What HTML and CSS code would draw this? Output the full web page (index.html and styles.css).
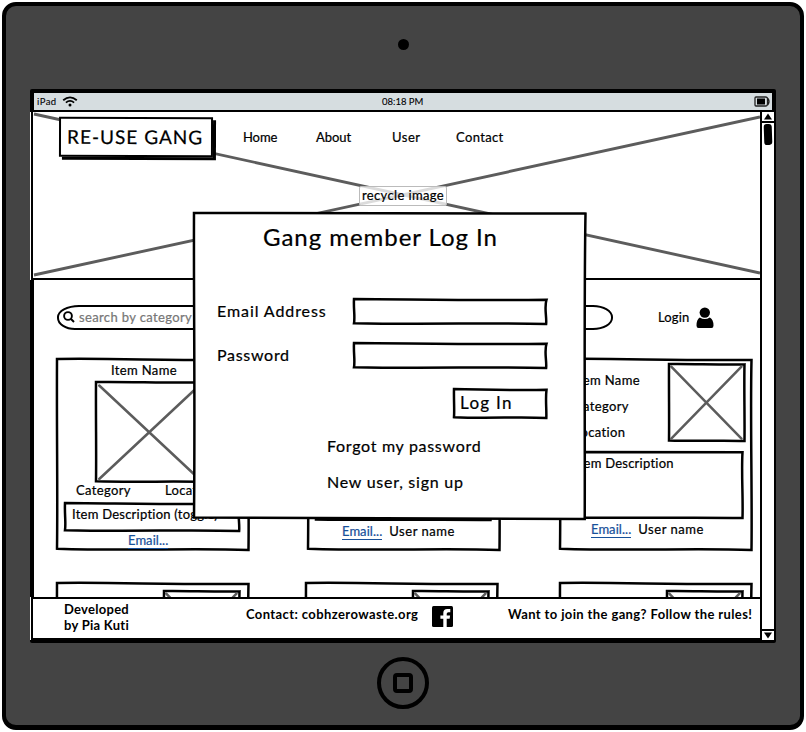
FILE: index.html
```
<!DOCTYPE html>
<html lang="en">
<head>
<meta charset="utf-8">
<title>Re-Use Gang</title>
<link rel="stylesheet" href="styles.css">
</head>
<body>
<svg class="defs" width="0" height="0" aria-hidden="true">
  <defs>
    <path id="box" vector-effect="non-scaling-stroke" d="M0,0 C30,-.5 60,1 100,.5 C99.3,30 100.4,70 100,100 C70,98.8 40,100.6 0,99.3 C.4,70 -.2,40 0,0Z"/>
    <path id="strip" vector-effect="non-scaling-stroke" d="M0,0 C30,1 60,6 100,3 C98.7,35 100.2,70 99.8,100 C70,94 40,103 0,97 C.6,70 -.3,40 0,0Z"/>
    <path id="cross" vector-effect="non-scaling-stroke" d="M3,3.5 L96,97 M96,3.5 L3,97"/>
  </defs>
</svg>
<div class="tablet">
  <div class="camera"></div>
  <div class="screen">
    <div class="status">
      <span class="carrier">iPad</span>
      <svg class="wifi" viewBox="0 0 16 11"><path d="M1.2 4.3Q8-1.6 14.8 4.3M3.9 6.6Q8 3.2 12.1 6.6"/><circle cx="8" cy="9" r="1.5"/></svg>
      <span class="clock">08:18 PM</span>
      <svg class="battery" viewBox="0 0 16 11"><path class="shell" d="M2 1h9.500q2 0 2 2v5q0 2-2 2h-9.500q-1 0-1-1v-7q0-1 1-1zM12.500 1.500q2.500 1 2.500 4t-2.500 4"/><rect x="3" y="2.500" width="8" height="6"/></svg>
    </div>
    <div class="view">
      <div class="page">
        <header class="hero">
          <svg class="hero-cross" viewBox="0 0 727 166" preserveAspectRatio="none"><path d="M1 2L727 161M1 163L727 5"/></svg>
          <div class="logo">RE-USE GANG</div>
          <nav><a class="n1">Home</a><a class="n2">About</a><a class="n3">User</a><a class="n4">Contact</a></nav>
          <div class="hero-label">recycle image</div>
        </header>
        <main>
          <div class="toolbar">
            <div class="search">
              <svg viewBox="0 0 12 12"><circle cx="5" cy="5" r="3.900"/><path d="M8 8l3 3"/></svg>
              <span>search by category</span>
            </div>
            <div class="login"><span>Login</span>
              <svg viewBox="0 0 18 22"><circle cx="8.800" cy="5.600" r="5.200"/><path d="M3.800 10.500Q8.800 13.500 13.800 10.500Q17.500 12.500 17.500 18.500Q17.500 21 15.500 21H2.500Q.5 21 .5 18.500Q.5 12.500 3.800 10.500Z"/></svg>
            </div>
          </div>
          <div class="row first">
            <article class="card">
              <svg class="frame" viewBox="0 0 100 100" preserveAspectRatio="none"><use href="#box"/></svg>
              <div class="name">Item Name</div>
              <div class="photo large"><svg class="frame" viewBox="0 0 100 100" preserveAspectRatio="none"><use href="#box"/><use class="x" href="#cross"/></svg></div>
              <div class="facts"><span>Category</span><span>Location</span></div>
              <div class="desc short"><svg class="frame" viewBox="0 0 100 100" preserveAspectRatio="none"><use href="#strip"/></svg><span>Item Description (toggle)</span></div>
              <div class="contact only"><a>Email...</a></div>
            </article>
            <article class="card">
              <svg class="frame" viewBox="0 0 100 100" preserveAspectRatio="none"><use href="#box"/></svg>
              <div class="info"></div>
              <div class="desc tall lower"><svg class="frame" viewBox="0 0 100 100" preserveAspectRatio="none"><use href="#box"/></svg></div>
              <div class="contact"><a>Email...</a><span>User name</span></div>
            </article>
            <article class="card">
              <svg class="frame" viewBox="0 0 100 100" preserveAspectRatio="none"><use href="#box"/></svg>
              <div class="info"><div class="lines"><span>Item Name</span><span>Category</span><span>Location</span></div><div class="photo small"><svg class="frame" viewBox="0 0 100 100" preserveAspectRatio="none"><use href="#box"/><use class="x" href="#cross"/></svg></div></div>
              <div class="desc tall"><svg class="frame" viewBox="0 0 100 100" preserveAspectRatio="none"><use href="#box"/></svg><span>Item Description</span></div>
              <div class="contact"><a>Email...</a><span>User name</span></div>
            </article>
          </div>
          <div class="row second">
            <article class="card"><svg class="frame" viewBox="0 0 100 100" preserveAspectRatio="none"><use href="#box"/></svg><div class="photo small"><svg class="frame" viewBox="0 0 100 100" preserveAspectRatio="none"><use href="#box"/><use class="x" href="#cross"/></svg></div></article>
            <article class="card"><svg class="frame" viewBox="0 0 100 100" preserveAspectRatio="none"><use href="#box"/></svg><div class="photo small"><svg class="frame" viewBox="0 0 100 100" preserveAspectRatio="none"><use href="#box"/><use class="x" href="#cross"/></svg></div></article>
            <article class="card"><svg class="frame" viewBox="0 0 100 100" preserveAspectRatio="none"><use href="#box"/></svg><div class="photo small"><svg class="frame" viewBox="0 0 100 100" preserveAspectRatio="none"><use href="#box"/><use class="x" href="#cross"/></svg></div></article>
          </div>
        </main>
        <footer>
          <div class="dev">Developed<br>by Pia Kuti</div>
          <div class="mail">Contact: cobhzerowaste.org</div>
          <svg class="fb" viewBox="0 0 21 21"><rect width="21" height="21" rx="1.500"/><path d="M11.300 21V12.700H8.400V9.500h2.900V7.100Q11.300 3 15.300 3H18.300V6.200H16.400Q14.700 6.200 14.700 7.700V9.500H18.100L17.600 12.700H14.700V21Z"/></svg>
          <div class="join">Want to join the gang? Follow the rules!</div>
        </footer>
      </div>
      <div class="scroll">
        <div class="arrow"><svg viewBox="0 0 8 7"><path d="M4 .5L8 6.500H0Z"/></svg></div>
        <div class="track"><div class="thumb"></div></div>
        <div class="arrow down"><svg viewBox="0 0 8 7"><path d="M0 .5H8L4 6.500Z"/></svg></div>
      </div>
    </div>
    <section class="modal">
      <svg class="frame" viewBox="0 0 100 100" preserveAspectRatio="none"><path vector-effect="non-scaling-stroke" d="M0,0C40,.4 70,-.2 100,.2C99.600,30 99.900,70 99.800,100C60,99.400 30,99.900 0,99.500C.3,60 -.1,30 0,0Z"/></svg>
      <h1>Gang member Log In</h1>
      <div class="field"><label class="l-email">Email Address</label><div class="input"><svg class="frame" viewBox="0 0 100 100" preserveAspectRatio="none"><use href="#strip"/></svg></div></div>
      <div class="field"><label class="l-pass">Password</label><div class="input"><svg class="frame" viewBox="0 0 100 100" preserveAspectRatio="none"><use href="#strip"/></svg></div></div>
      <div class="submit"><svg class="frame" viewBox="0 0 100 100" preserveAspectRatio="none"><use href="#strip"/></svg><span>Log In</span></div>
      <a class="forgot">Forgot my password</a>
      <a class="signup">New user, sign up</a>
    </section>
  </div>
  <div class="home"><div></div></div>
</div>
</body>
</html>
```
FILE: styles.css
```
* { box-sizing: border-box; }
body { margin: 0; background: #fff; color: #000; font: 13px/16px Lato, "Liberation Sans", sans-serif; letter-spacing: .36px; font-variant-ligatures: none; -webkit-text-stroke: .22px; white-space: nowrap; }
svg { display: block; }
.defs { position: absolute; }
.tablet { width: 802px; height: 728px; margin: 2px; border: 4px solid #000; border-bottom-width: 5px; border-radius: 14px; background: #444; display: flex; flex-direction: column; align-items: center; }
.camera { flex: none; width: 11px; height: 11px; border-radius: 50%; background: #000; margin-top: 33px; }
.screen { position: relative; flex: none; width: 746px; height: 554px; margin: 39px 0 0 24px; border-radius: 2px; background: #000; display: flex; flex-direction: column; align-self: flex-start; }
.status { flex: none; height: 17px; margin: 4px 4px 2px; background: #d6dde0; display: flex; align-items: center; font-size: 9.500px; padding: 0 2px 0 3px; -webkit-text-stroke: .1px; }
.carrier { width: 24px; letter-spacing: .45px; }
.wifi { width: 16px; height: 11px; margin-left: 1px; }
.wifi path { fill: none; stroke: #000; stroke-width: 1.800; }
.clock { margin-left: 304px; width: 44px; letter-spacing: 0; }
.battery { width: 16px; height: 11px; margin-left: auto; }
.shell { fill: none; stroke: #222; stroke-width: 1.300; }
.view { flex: 1; min-height: 0; display: flex; margin: 0 2px 3px 0; background: #fff; }
.page { width: 730px; display: flex; flex-direction: column; }

.hero { position: relative; flex: none; height: 168px; margin-left: 1px; border: 2px solid #000; border-width: 0 0 2px 2px; display: flex; }
.hero-cross { position: absolute; inset: 0; width: 100%; height: 166px; fill: none; stroke: #5c5c5c; stroke-width: 2.900; }
.logo { position: relative; width: 154px; height: 40px; margin: 5px 0 0 26px; background: #fff; border: 2px solid #000; box-shadow: 3px 3px #000; font-size: 19px; line-height: 36px; padding-left: 6px; letter-spacing: 1.020px; transform: rotate(.15deg); }
nav { position: relative; display: flex; margin: 17px 0 0 30px; }
.n1 { width: 73px; letter-spacing: -.1px; }
.n2 { width: 76px; letter-spacing: -.05px; }
.n3 { width: 64px; letter-spacing: .5px; }
.hero-label { position: absolute; left: 326px; top: 74px; width: 88px; height: 20px; border: 1px solid #bbb; border-radius: 2px; background: rgba(255,255,255,.78); line-height: 16px; padding-left: 2px; }

main { flex: 1 1 0; min-height: 0; overflow: hidden; border-left: 4px solid #000; }
.toolbar { display: flex; margin: 25px 0 0 23px; }
.search { width: 556px; height: 25px; border: 2px solid #000; border-radius: 22px 20px 20px 18px / 12px; display: flex; align-items: center; padding: 0 0 2px 4px; color: #777; }
.search svg { width: 12px; height: 12px; margin-right: 4px; fill: none; stroke: #000; stroke-width: 1.900; }
.login { display: flex; align-items: center; margin-left: 45px; letter-spacing: .16px; }
.login span { margin-top: -2px; }
.login svg { width: 18px; height: 22px; margin-left: 7px; }
.row { display: flex; }
.first { margin: 28px 0 0 22px; gap: 58px; }
.first .card:nth-child(3) { margin-left: 1px; }
.second { margin: 31px 0 0 22px; gap: 56px; }
.second .card { align-items: flex-end; padding: 8px 9px 0 0; }
.second .card:nth-child(3) { margin-left: 5px; }
.card { position: relative; flex: none; width: 194px; height: 193px; margin-right: -1px; display: flex; flex-direction: column; }
.frame { position: absolute; left: 1px; top: 1px; width: calc(100% - 2.500px); height: calc(100% - 2px); overflow: visible; fill: #fff; stroke: #000; stroke-width: 2.500; }
.frame .x { stroke: #5c5c5c; fill: none; stroke-width: 2.500; stroke-linecap: round; }
.card > div { position: relative; flex: none; }
.photo { position: relative; flex: none; }
.large { width: 110px; height: 102px; margin: 3px 0 0 39px; }
.small { width: 78px; height: 79px; }
.name { margin: 4px 0 0 55px; }
.facts { display: flex; height: 16px; margin: -1px 0 0 20px; }
.facts span:first-child { width: 89px; }
.desc > span { position: relative; display: block; letter-spacing: .24px; }
.short { width: 177px; height: 30px; margin: 4px 0 0 8px; padding: 4px 0 0 8px; }
.tall { width: 177px; height: 68px; margin: 9px 0 0 8px; padding: 4px 0 0 8px; }
.tall.lower { height: 70px; }
.contact { display: flex; align-items: flex-start; margin: 3px 0 0 32px; gap: 7px; }
.lower + .contact { margin: 3px 0 0 35px; }
.contact a { color: #17509a; border-bottom: 1px solid #17509a; line-height: 15px; letter-spacing: .05px; }
.contact span { line-height: 15px; letter-spacing: .54px; }
.contact.only { margin: 1px 0 0 72px; }
.info { display: flex; justify-content: space-between; height: 79px; margin: 5px 7px 0 15px; }
.lines { display: flex; flex-direction: column; padding-top: 9px; gap: 10px; }

footer { position: relative; flex: none; height: 43px; margin-left: 1px; border: 2px solid #000; border-right: 0; background: #fff; display: flex; font-weight: 700; -webkit-text-stroke: 0; }
.dev { margin: 2px 0 0 31px; width: 182px; letter-spacing: .27px; }
.mail { width: 186px; margin-top: 7px; letter-spacing: .4px; }
.fb { width: 21px; height: 21px; margin-top: 7px; }
.fb path { fill: #fff; }
.join { margin: 7px 0 0 55px; letter-spacing: .38px; }

.scroll { flex: 1; display: flex; flex-direction: column; border-left: 2px solid #000; }
.arrow { height: 11px; border-bottom: 2px solid #000; padding: 1px 0 0 2px; }
.arrow svg { width: 8px; height: 7px; }
.arrow.down { height: 11px; border-top: 2px solid #000; border-bottom: 0; }
.track { flex: 1; padding: 1px 0 0 2px; }
.thumb { width: 8px; height: 21px; border-radius: 3px; background: #000; transform: rotate(-2deg); }

.modal { position: absolute; left: 163px; top: 123px; width: 394px; height: 308px; display: flex; flex-direction: column; font-size: 16px; line-height: 20px; }
.modal > :not(.frame) { position: relative; }
h1 { margin: 10px 0 46px 70px; font-size: 24px; line-height: 30px; font-weight: 400; letter-spacing: .960px; }
.field { display: flex; height: 44px; padding-left: 24px; }
.field label { width: 136px; padding-top: 3px; letter-spacing: .920px; }
.field .l-pass { letter-spacing: .700px; }
.input { position: relative; width: 195px; height: 27px; }
.submit { width: 95px; height: 31px; margin: 2px 0 0 260px; font-size: 17px; }
.submit span { position: relative; display: block; padding: 5px 0 0 7px; letter-spacing: 1.300px; }
.forgot { margin: 17px 0 0 134px; letter-spacing: .700px; }
.signup { margin: 16px 0 0 134px; letter-spacing: .750px; }

.home { flex: none; width: 52px; height: 52px; margin: 14px 0 0 0; border: 4px solid #000; border-radius: 50%; display: grid; place-items: center; }
.home div { width: 20px; height: 20px; border: 4px solid #000; border-radius: 4px; }
```
